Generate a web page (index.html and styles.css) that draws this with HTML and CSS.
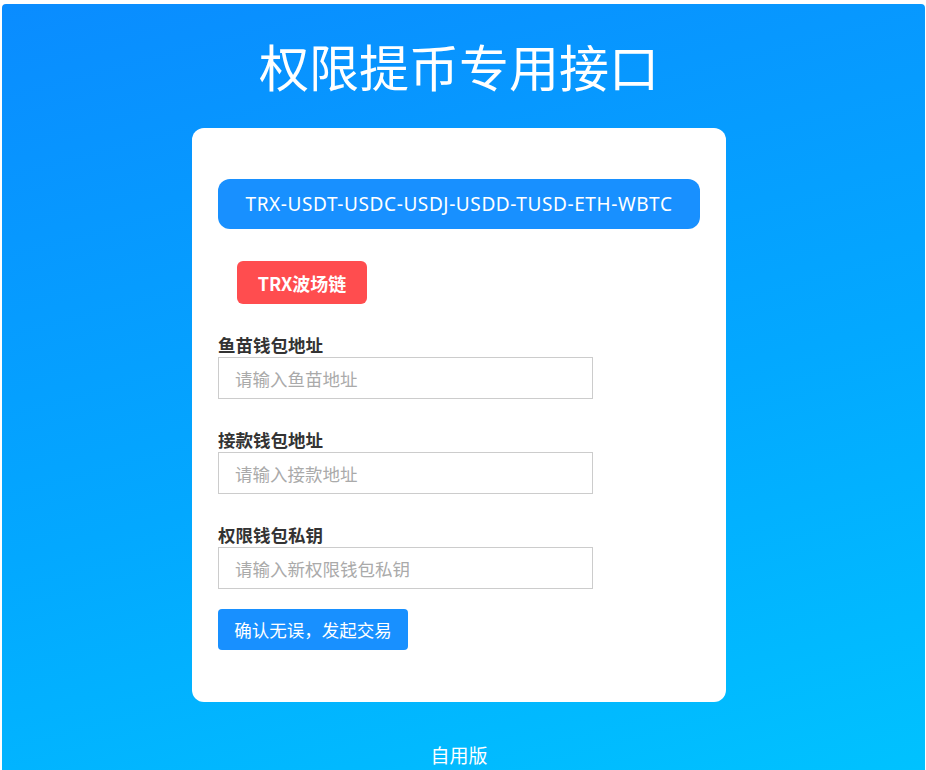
FILE: index.html
```html
<!DOCTYPE html>
<html lang="zh-CN">

<head>
    <meta charset="UTF-8">
    <meta name="viewport" content="width=device-width, initial-scale=1.0">
    <title>权限提币专用接口</title>
    <link rel="stylesheet" href="styles.css">
</head>

<body>
    <div class="page">
        <h1 class="title">权限提币专用接口</h1>

        <div class="card">
            <div class="coins">TRX-USDT-USDC-USDJ-USDD-TUSD-ETH-WBTC</div>

            <div class="chain">TRX波场链</div>

            <div class="field">
                <label class="field-label">鱼苗钱包地址</label>
                <input class="field-input" type="text" placeholder="请输入鱼苗地址">
            </div>
            <div class="field">
                <label class="field-label">接款钱包地址</label>
                <input class="field-input" type="text" placeholder="请输入接款地址">
            </div>
            <div class="field">
                <label class="field-label">权限钱包私钥</label>
                <input class="field-input" type="text" placeholder="请输入新权限钱包私钥">
            </div>

            <button class="submit">确认无误，发起交易</button>
        </div>

        <div class="footer">自用版</div>
    </div>
</body>

</html>
```

FILE: styles.css
```css
body {
    margin: 4px 1px 0 2px;
    background-color: #fff;
    font-family: "Noto Sans", "Noto Sans CJK SC", sans-serif;
}

.page {
    min-height: 766px;
    padding-right: 9px;
    border-radius: 4px 4px 0 0;
    background: linear-gradient(165deg, #0a8cff 0%, #03a8ff 55%, #00c2ff 100%);
    display: flex;
    flex-direction: column;
    align-items: center;
}

.title {
    margin: 31px 0 0;
    color: #fff;
    font-family: "Noto Sans CJK SC", sans-serif;
    font-size: 50px;
    font-weight: 400;
    line-height: 60px;
}

.card {
    width: 482px;
    margin-top: 33px;
    padding: 51px 26px 52px;
    background-color: #fff;
    border-radius: 12px;
    display: flex;
    flex-direction: column;
    align-items: flex-start;
}

.coins {
    align-self: stretch;
    height: 50px;
    border-radius: 12px;
    background-color: #1890ff;
    color: #fff;
    font-size: 19px;
    letter-spacing: 0.6px;
    display: flex;
    align-items: center;
    justify-content: center;
}

.chain {
    margin: 32px 0 0 19px;
    width: 130px;
    height: 43px;
    border-radius: 6px;
    background-color: #ff4d4f;
    color: #fff;
    font-family: "Noto Sans CJK SC", sans-serif;
    font-size: 18px;
    font-weight: 700;
    display: flex;
    align-items: center;
    justify-content: center;
}

.field {
    margin-top: 29px;
    display: flex;
    flex-direction: column;
}

.field-label {
    color: #333;
    font-family: "Noto Sans CJK SC", sans-serif;
    font-size: 17.5px;
    font-weight: 700;
    line-height: 24px;
}

.field-input {
    box-sizing: border-box;
    width: 375px;
    height: 42px;
    padding: 0 16px;
    border: 1px solid #ccc;
    font-family: "Noto Sans CJK SC", sans-serif;
    font-size: 17.5px;
    color: #333;
    outline: none;
}

.field-input::placeholder {
    color: #aaa;
}

.submit {
    margin-top: 20px;
    width: 190px;
    height: 41px;
    border: none;
    border-radius: 4px;
    background-color: #1890ff;
    color: #fff;
    font-family: "Noto Sans CJK SC", sans-serif;
    font-size: 17.5px;
}

.footer {
    margin-top: 39px;
    color: #fff;
    font-family: "Noto Sans CJK SC", sans-serif;
    font-size: 19px;
}
```
